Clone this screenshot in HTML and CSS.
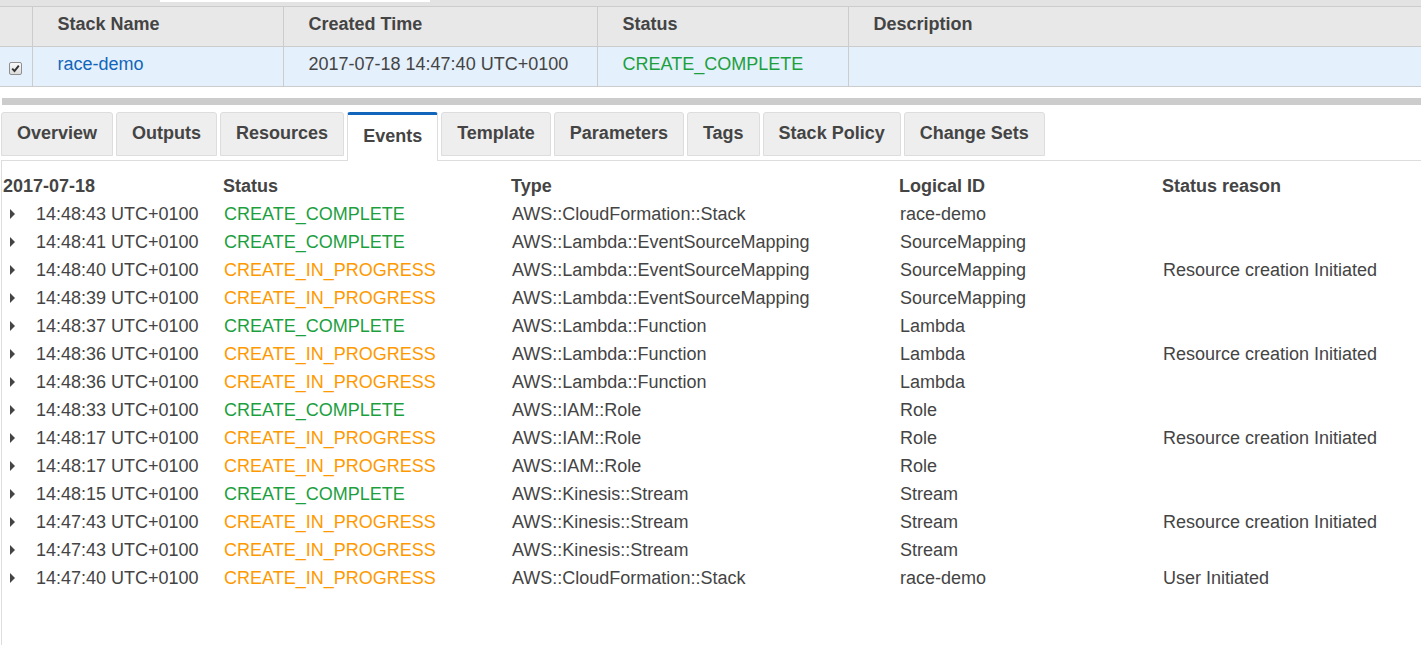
FILE: index.html
```html
<!DOCTYPE html>
<html>
<head>
<meta charset="utf-8">
<link rel="stylesheet" href="styles.css">
</head>
<body>
<div class="topbar"><div class="topbar-input"></div></div>
<table class="stacks">
  <thead>
    <tr>
      <th class="c-check"></th>
      <th class="c-name">Stack Name</th>
      <th class="c-time">Created Time</th>
      <th class="c-status">Status</th>
      <th class="c-desc">Description</th>
    </tr>
  </thead>
  <tbody>
    <tr class="selected">
      <td class="c-check"><span class="checkbox"><svg width="9" height="9" viewBox="0 0 9 9"><path d="M1.2 4.6 L3.5 7 L7.8 1.6" fill="none" stroke="#333" stroke-width="1.9"/></svg></span></td>
      <td class="c-name"><a class="link">race-demo</a></td>
      <td class="c-time">2017-07-18 14:47:40 UTC+0100</td>
      <td class="c-status ok">CREATE_COMPLETE</td>
      <td class="c-desc"></td>
    </tr>
  </tbody>
</table>
<div class="spacer"></div>
<div class="splitter"></div>
<div class="tabs">
  <div class="tab">Overview</div>
  <div class="tab">Outputs</div>
  <div class="tab">Resources</div>
  <div class="tab active">Events</div>
  <div class="tab">Template</div>
  <div class="tab">Parameters</div>
  <div class="tab">Tags</div>
  <div class="tab">Stack Policy</div>
  <div class="tab">Change Sets</div>
</div>
<div class="panel">
  <div class="events">
    <div class="ev-head">
      <div>2017-07-18</div><div>Status</div><div>Type</div><div>Logical ID</div><div>Status reason</div>
    </div>
    <div class="ev-row"><div class="ev-time"><span class="arrow"></span>14:48:43 UTC+0100</div><div class="ok">CREATE_COMPLETE</div><div>AWS::CloudFormation::Stack</div><div>race-demo</div><div></div></div>
    <div class="ev-row"><div class="ev-time"><span class="arrow"></span>14:48:41 UTC+0100</div><div class="ok">CREATE_COMPLETE</div><div>AWS::Lambda::EventSourceMapping</div><div>SourceMapping</div><div></div></div>
    <div class="ev-row"><div class="ev-time"><span class="arrow"></span>14:48:40 UTC+0100</div><div class="prog">CREATE_IN_PROGRESS</div><div>AWS::Lambda::EventSourceMapping</div><div>SourceMapping</div><div>Resource creation Initiated</div></div>
    <div class="ev-row"><div class="ev-time"><span class="arrow"></span>14:48:39 UTC+0100</div><div class="prog">CREATE_IN_PROGRESS</div><div>AWS::Lambda::EventSourceMapping</div><div>SourceMapping</div><div></div></div>
    <div class="ev-row"><div class="ev-time"><span class="arrow"></span>14:48:37 UTC+0100</div><div class="ok">CREATE_COMPLETE</div><div>AWS::Lambda::Function</div><div>Lambda</div><div></div></div>
    <div class="ev-row"><div class="ev-time"><span class="arrow"></span>14:48:36 UTC+0100</div><div class="prog">CREATE_IN_PROGRESS</div><div>AWS::Lambda::Function</div><div>Lambda</div><div>Resource creation Initiated</div></div>
    <div class="ev-row"><div class="ev-time"><span class="arrow"></span>14:48:36 UTC+0100</div><div class="prog">CREATE_IN_PROGRESS</div><div>AWS::Lambda::Function</div><div>Lambda</div><div></div></div>
    <div class="ev-row"><div class="ev-time"><span class="arrow"></span>14:48:33 UTC+0100</div><div class="ok">CREATE_COMPLETE</div><div>AWS::IAM::Role</div><div>Role</div><div></div></div>
    <div class="ev-row"><div class="ev-time"><span class="arrow"></span>14:48:17 UTC+0100</div><div class="prog">CREATE_IN_PROGRESS</div><div>AWS::IAM::Role</div><div>Role</div><div>Resource creation Initiated</div></div>
    <div class="ev-row"><div class="ev-time"><span class="arrow"></span>14:48:17 UTC+0100</div><div class="prog">CREATE_IN_PROGRESS</div><div>AWS::IAM::Role</div><div>Role</div><div></div></div>
    <div class="ev-row"><div class="ev-time"><span class="arrow"></span>14:48:15 UTC+0100</div><div class="ok">CREATE_COMPLETE</div><div>AWS::Kinesis::Stream</div><div>Stream</div><div></div></div>
    <div class="ev-row"><div class="ev-time"><span class="arrow"></span>14:47:43 UTC+0100</div><div class="prog">CREATE_IN_PROGRESS</div><div>AWS::Kinesis::Stream</div><div>Stream</div><div>Resource creation Initiated</div></div>
    <div class="ev-row"><div class="ev-time"><span class="arrow"></span>14:47:43 UTC+0100</div><div class="prog">CREATE_IN_PROGRESS</div><div>AWS::Kinesis::Stream</div><div>Stream</div><div></div></div>
    <div class="ev-row"><div class="ev-time"><span class="arrow"></span>14:47:40 UTC+0100</div><div class="prog">CREATE_IN_PROGRESS</div><div>AWS::CloudFormation::Stack</div><div>race-demo</div><div>User Initiated</div></div>
  </div>
</div>
</body>
</html>
```

FILE: styles.css
```css
html, body {
  margin: 0;
  padding: 0;
  background: #ffffff;
  font-family: "Liberation Sans", Arial, sans-serif;
  font-size: 18px;
  color: #444444;
  overflow: hidden;
  height: 645px;
}

.topbar {
  height: 6px;
  background: #e3e3e3;
}
.topbar-input {
  margin-left: 160px;
  width: 270px;
  height: 2px;
  background: #ffffff;
}

.stacks {
  border-collapse: collapse;
  width: 1421px;
  table-layout: fixed;
}
.stacks th, .stacks td {
  border: 1px solid #cccccc;
  padding: 0 0 0 25px;
  text-align: left;
  white-space: nowrap;
  overflow: hidden;
  box-sizing: border-box;
}
.stacks th {
  height: 40px;
  background: #e8e8e8;
  font-weight: bold;
  padding-bottom: 5px;
}
.stacks td {
  height: 40px;
  background: #e4f0fb;
  padding-bottom: 4px;
}
.stacks th:first-child, .stacks td:first-child { border-left: 0; }
.stacks th:last-child, .stacks td:last-child { border-right: 0; }
.stacks .c-check { width: 32px; padding: 0; text-align: center; }
.stacks .c-name { width: 251px; }
.stacks .c-time { width: 314px; }
.stacks .c-status { width: 251px; }
.stacks td.c-check { padding-top: 2px; }

.checkbox {
  display: inline-flex;
  align-items: center;
  justify-content: center;
  width: 11px;
  height: 11px;
  border: 1px solid #8f8f8f;
  border-radius: 2px;
  background: linear-gradient(#fafafa, #dcdcdc);
  vertical-align: middle;
}

.link { color: #1166bb; text-decoration: none; }
.ok { color: #1d9f3f; }
.prog { color: #ff9900; }

.spacer { height: 11px; }
.splitter {
  height: 7px;
  background: #cccccc;
  margin-left: 2px;
}

.tabs {
  display: flex;
  align-items: flex-end;
  gap: 3px;
  padding: 7px 0 0 1px;
  height: 48px;
  position: relative;
  z-index: 1;
}
.tab {
  height: 44px;
  box-sizing: border-box;
  padding: 0 15px 2px 15px;
  background: #eeeeee;
  border: 1px solid #dddddd;
  border-radius: 3px 3px 0 0;
  font-weight: bold;
  display: flex;
  align-items: center;
  margin-bottom: 4px;
}
.tab.active {
  height: 49px;
  background: #ffffff;
  border-top: 3px solid #1166bb;
  border-bottom: 0;
  margin-bottom: -1px;
  padding: 0 15px 4px 15px;
}

.panel {
  border-top: 1px solid #dddddd;
  border-left: 1px solid #dddddd;
  margin-left: 1px;
  padding: 11px 0 0 0;
  height: 500px;
}

.ev-head, .ev-row {
  display: grid;
  grid-template-columns: 220px 288px 388px 263px 1fr;
  height: 28px;
  align-items: center;
  white-space: nowrap;
}
.ev-head { font-weight: bold; padding-left: 1px; }
.ev-row > div:not(.ev-time) { padding-left: 2px; }
.ev-time {
  display: flex;
  align-items: center;
  padding-left: 8px;
}
.arrow {
  display: inline-block;
  width: 0;
  height: 0;
  border-top: 5px solid transparent;
  border-bottom: 5px solid transparent;
  border-left: 5px solid #444444;
  margin-right: 21px;
}
```
